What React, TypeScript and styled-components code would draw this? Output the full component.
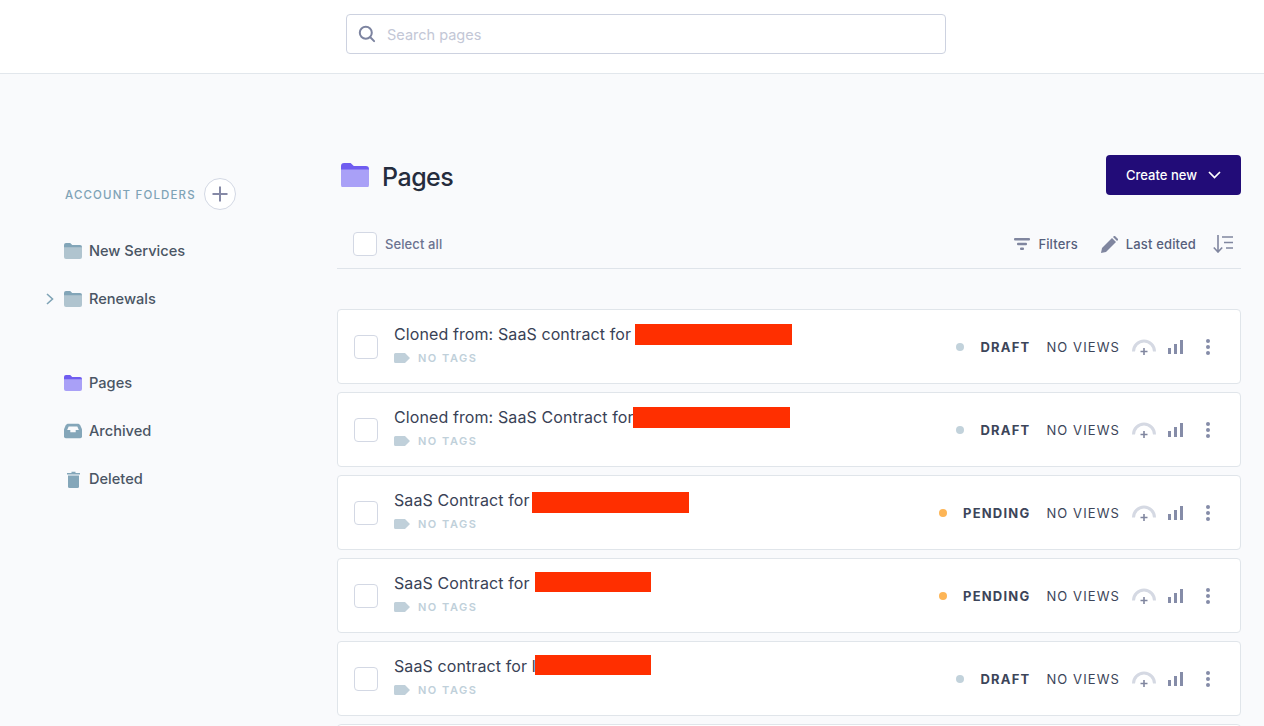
import React from "react";
import styled, { createGlobalStyle } from "styled-components";

const GlobalStyle = createGlobalStyle`
  html, body {
    margin: 0;
    padding: 0;
    height: 100%;
    overflow: hidden;
    background: #f9fafc;
    font-family: Inter, "Liberation Sans", sans-serif;
  }
  * { box-sizing: border-box; }
`;

type Status = "DRAFT" | "PENDING";

type Row = {
  title: string;
  status: Status;
  gap: number;
  redact: number;
  redactHeight: number;
  redactNudge: number;
};

const rows: Row[] = [
  { title: "Cloned from: SaaS contract for", status: "DRAFT", gap: 4, redact: 157, redactHeight: 21, redactNudge: 0 },
  { title: "Cloned from: SaaS Contract for", status: "DRAFT", gap: -1, redact: 157, redactHeight: 21, redactNudge: 0 },
  { title: "SaaS Contract for", status: "PENDING", gap: 2, redact: 157, redactHeight: 21, redactNudge: 2 },
  { title: "SaaS Contract for", status: "PENDING", gap: 5, redact: 116, redactHeight: 20, redactNudge: -1 },
  { title: "SaaS contract for l", status: "DRAFT", gap: -1, redact: 116, redactHeight: 20, redactNudge: -1 }
];

const FolderIcon = ({ size = 18, back, front }: { size?: number; back: string; front: string }) => (
  <svg width={size} height={(size * 16) / 18} viewBox="0 0 18 16">
    <path d="M0 2a2 2 0 0 1 2-2h4.200l2 2H16a2 2 0 0 1 2 2v2H0z" fill={back} />
    <path d="M0 4.200h18V14a2 2 0 0 1-2 2H2a2 2 0 0 1-2-2z" fill={front} />
  </svg>
);

const App = () => {
  return (
    <>
      <GlobalStyle />
      <Header>
        <SearchBox>
          <svg width="18" height="18" viewBox="0 0 18 18" fill="none" stroke="#7d84a0" strokeWidth="2">
            <circle cx="7.800" cy="7.800" r="6" />
            <path d="M12.300 12.300l3.800 3.800" strokeLinecap="round" />
          </svg>
          <SearchText>Search pages</SearchText>
        </SearchBox>
      </Header>
      <Body>
        <Sidebar>
          <FolderHead>
            <FolderLabel>ACCOUNT FOLDERS</FolderLabel>
            <AddButton>
              <svg width="16" height="16" viewBox="0 0 16 16" stroke="#8589a6" strokeWidth="2">
                <path d="M8 .5v15M.5 8h15" />
              </svg>
            </AddButton>
          </FolderHead>
          <NavGroup>
            <NavItem>
              <NavIcon>
                <FolderIcon back="#82a5b8" front="#b0c4cf" />
              </NavIcon>
              New Services
            </NavItem>
            <NavItem>
              <Caret>
                <svg width="8" height="12" viewBox="0 0 8 12" fill="none" stroke="#7fa3b6" strokeWidth="1.600">
                  <path d="M1 1l5.500 5L1 11" />
                </svg>
              </Caret>
              <NavIcon>
                <FolderIcon back="#82a5b8" front="#b0c4cf" />
              </NavIcon>
              Renewals
            </NavItem>
          </NavGroup>
          <NavGroup $top={36}>
            <NavItem>
              <NavIcon>
                <FolderIcon back="#6f5cf0" front="#a9a0f7" />
              </NavIcon>
              Pages
            </NavItem>
            <NavItem>
              <NavIcon>
                <svg width="20" height="16" viewBox="0 0 20 16">
                  <path
                    d="M5 0h10c1.500 0 2.500.6 3.200 1.800L20 6v8a2 2 0 0 1-2 2H2a2 2 0 0 1-2-2V6l1.800-4.200C2.500.6 3.500 0 5 0z"
                    fill="#84a6b9"
                  />
                  <path d="M5.200 3h9.600L16.500 7H13v2.500H7V7H3.500z" fill="#f9fafc" />
                </svg>
              </NavIcon>
              Archived
            </NavItem>
            <NavItem>
              <NavIcon>
                <svg width="13" height="17" viewBox="0 0 13 17" fill="#84a6b9">
                  <path d="M0 2h4.500V.8h4V2H13v1.500H0z" />
                  <path d="M1 4.500h11V15.500a1.500 1.500 0 0 1-1.500 1.500h-8A1.500 1.500 0 0 1 1 15.500z" />
                </svg>
              </NavIcon>
              Deleted
            </NavItem>
          </NavGroup>
        </Sidebar>
        <Main>
          <TitleRow>
            <TitleLeft>
              <FolderIcon size={28} back="#6f5cf0" front="#a9a0f7" />
              <Title>Pages</Title>
            </TitleLeft>
            <CreateButton>
              Create new
              <svg width="13" height="8" viewBox="0 0 13 8" fill="none" stroke="#fff" strokeWidth="1.700">
                <path d="M1 1l5.500 5.500L12 1" />
              </svg>
            </CreateButton>
          </TitleRow>
          <Toolbar>
            <SelectAll>
              <Check />
              <SelectLabel>Select all</SelectLabel>
            </SelectAll>
            <ToolActions>
              <ToolAction>
                <svg width="16" height="12" viewBox="0 0 16 12" fill="#80869f">
                  <rect x="0" y="0" width="16" height="2.400" rx="1" />
                  <rect x="3" y="4.800" width="10" height="2.400" rx="1" />
                  <rect x="6" y="9.600" width="4" height="2.400" rx="1" />
                </svg>
                Filters
              </ToolAction>
              <ToolAction>
                <svg width="17" height="17" viewBox="0 0 17 17" fill="#80869f">
                  <path d="M0 17l1-5L11 2l4 4L5 16z" />
                  <path d="M12 1l1-1h1l3 3v1l-1 1z" />
                </svg>
                Last edited
              </ToolAction>
              <SortIcon width="21" height="18" viewBox="0 0 21 18" fill="none" stroke="#80869f" strokeWidth="1.600">
                <path d="M5 0v16.500M.8 12.500L5 17l4.200-4.500" />
                <path d="M9 2h11M11 7.500h9M13 13h7" />
              </SortIcon>
            </ToolActions>
          </Toolbar>
          <Cards>
            {rows.map((row, i) => (
              <Card key={i}>
                <Check />
                <CardInfo>
                  <CardTitle>
                    {row.title}
                    <Redacted
                      $width={row.redact}
                      $height={row.redactHeight}
                      $gap={row.gap}
                      $nudge={row.redactNudge}
                    />
                  </CardTitle>
                  <TagLine>
                    <svg width="16" height="10" viewBox="0 0 16 10" fill="#c0d0da">
                      <path d="M1.500 0H11l5 5-5 5H1.500A1.500 1.500 0 0 1 0 8.500v-7A1.500 1.500 0 0 1 1.500 0z" />
                    </svg>
                    <TagText>NO TAGS</TagText>
                  </TagLine>
                </CardInfo>
                <StatusDot $pending={row.status === "PENDING"} />
                <StatusText>{row.status}</StatusText>
                <Views>NO VIEWS</Views>
                <CardIcons>
                  <svg width="24" height="16" viewBox="0 0 24 16" fill="none">
                    <path d="M1.500 12.500A10.500 10.500 0 0 1 22.500 12.500" stroke="#d5d9e3" strokeWidth="3" />
                    <path d="M12 9v7M8.500 12.500h7" stroke="#80869f" strokeWidth="1.600" />
                  </svg>
                  <svg width="15" height="14" viewBox="0 0 15 14" fill="#858ca8">
                    <rect x="0" y="8" width="3" height="6" />
                    <rect x="6" y="4" width="3" height="10" />
                    <rect x="12" y="0" width="3" height="14" />
                  </svg>
                  <svg width="4" height="16" viewBox="0 0 4 16" fill="#858ca8">
                    <circle cx="2" cy="2" r="2" />
                    <circle cx="2" cy="8" r="2" />
                    <circle cx="2" cy="14" r="2" />
                  </svg>
                </CardIcons>
              </Card>
            ))}
            <Card />
          </Cards>
        </Main>
      </Body>
    </>
  );
};

const Header = styled.header`
  height: 74px;
  background: #fff;
  border-bottom: 1px solid #e2e7ec;
  display: flex;
  padding: 14px 0 0 346px;
`;

const SearchBox = styled.div`
  width: 600px;
  height: 40px;
  border: 1px solid #cdd2e0;
  border-radius: 4px;
  background: #fff;
  display: flex;
  align-items: center;
  padding-left: 11px;
  gap: 11px;
`;

const SearchText = styled.span`
  font-size: 14.500px;
  color: #c3c7d6;
`;

const Body = styled.div`
  display: flex;
  height: 652px;
  overflow: hidden;
`;

const Sidebar = styled.aside`
  width: 337px;
  flex: none;
  padding: 104px 0 0 65px;
`;

const FolderHead = styled.div`
  display: flex;
  align-items: center;
  gap: 8px;
  height: 32px;
  margin-bottom: 17px;
`;

const FolderLabel = styled.span`
  font-size: 11.500px;
  font-weight: 500;
  letter-spacing: 1.160px;
  color: #7fa3b6;
  padding-top: 2px;
`;

const AddButton = styled.span`
  width: 32px;
  height: 32px;
  border-radius: 50%;
  border: 1px solid #d3d8e4;
  background: #fff;
  display: flex;
  align-items: center;
  justify-content: center;
`;

const NavGroup = styled.div<{ $top?: number }>`
  margin-top: ${({ $top = 0 }) => $top}px;
  display: flex;
  flex-direction: column;
`;

const NavItem = styled.div`
  position: relative;
  height: 48px;
  display: flex;
  align-items: center;
  font-size: 14.600px;
  font-weight: 500;
  color: #4a5564;
`;

const NavIcon = styled.span`
  width: 18px;
  margin: 0 7px 0 -1px;
  display: flex;
  justify-content: center;
  align-items: center;
`;

const Caret = styled.span`
  position: absolute;
  left: -19px;
  top: 18px;
  display: flex;
`;

const Main = styled.main`
  width: 904px;
  flex: none;
`;

const TitleRow = styled.div`
  margin-top: 81px;
  height: 40px;
  display: flex;
  align-items: center;
  justify-content: space-between;
`;

const TitleLeft = styled.div`
  display: flex;
  align-items: center;
  gap: 13px;
  padding-left: 4px;
`;

const Title = styled.h1`
  margin: 0;
  padding-top: 3px;
  font-size: 25px;
  font-weight: 500;
  letter-spacing: -0.500px;
  color: #252c3d;
`;

const CreateButton = styled.button`
  width: 135px;
  height: 40px;
  border: 0;
  border-radius: 4px;
  background: #220c78;
  color: #fff;
  font: 500 13px Inter, "Liberation Sans", sans-serif;
  display: flex;
  align-items: center;
  justify-content: center;
  gap: 11px;
`;

const Toolbar = styled.div`
  margin-top: 25px;
  height: 49px;
  border-bottom: 1px solid #dfe4ea;
  display: flex;
  align-items: center;
  justify-content: space-between;
  padding: 0 7px 1px 16px;
`;

const SelectAll = styled.div`
  display: flex;
  align-items: center;
  gap: 8px;
`;

const Check = styled.span`
  width: 24px;
  height: 24px;
  flex: none;
  border: 1px solid #d3d8e4;
  border-radius: 4px;
  background: #fff;
`;

const SelectLabel = styled.span`
  font-size: 13px;
  font-weight: 500;
  letter-spacing: 0.100px;
  color: #6b7390;
  padding-top: 1px;
`;

const ToolActions = styled.div`
  display: flex;
  align-items: center;
  gap: 23px;
`;

const ToolAction = styled.span`
  display: flex;
  align-items: center;
  gap: 8px;
  font-size: 13px;
  font-weight: 500;
  letter-spacing: 0.150px;
  color: #565f7d;
  padding-top: 1px;
`;

const SortIcon = styled.svg`
  margin-left: -6px;
`;

const Cards = styled.div`
  margin-top: 40px;
  display: flex;
  flex-direction: column;
  gap: 8px;
`;

const Card = styled.div`
  height: 75px;
  flex: none;
  background: #fff;
  border: 1px solid #e0e5ea;
  border-radius: 4px;
  display: flex;
  align-items: center;
  padding: 0 30px 0 16px;
`;

const CardInfo = styled.div`
  margin-left: 16px;
  flex: 1;
  display: flex;
  flex-direction: column;
  gap: 5.500px;
  padding-bottom: 5px;
`;

const CardTitle = styled.div`
  display: flex;
  align-items: center;
  font-size: 16px;
  letter-spacing: 0.100px;
  color: #394256;
  height: 22px;
`;

const Redacted = styled.span<{ $width: number; $height: number; $gap: number; $nudge: number }>`
  display: block;
  width: ${({ $width }) => $width}px;
  height: ${({ $height }) => $height}px;
  margin-left: ${({ $gap }) => $gap}px;
  transform: translateY(${({ $nudge }) => $nudge}px);
  background: #ff2f00;
`;

const TagLine = styled.div`
  display: flex;
  align-items: center;
  gap: 8px;
`;

const TagText = styled.span`
  font-size: 11px;
  font-weight: 600;
  letter-spacing: 1.500px;
  color: #c0d0da;
`;

const StatusDot = styled.span<{ $pending: boolean }>`
  width: 8px;
  height: 8px;
  border-radius: 50%;
  background: ${({ $pending }) => ($pending ? "#fdb556" : "#c2d2db")};
  margin: 1px 16px 0 0;
`;

const StatusText = styled.span`
  font-size: 13px;
  font-weight: 700;
  letter-spacing: 1.200px;
  color: #3c4559;
  margin: 1px 16px 0 0;
`;

const Views = styled.span`
  font-size: 13px;
  letter-spacing: 1.100px;
  color: #3c4559;
  margin: 1px 12px 0 0;
`;

const CardIcons = styled.div`
  display: flex;
  align-items: center;
  gap: 12px;
  & > svg:last-child {
    margin-left: 11px;
  }
`;

export default App;
